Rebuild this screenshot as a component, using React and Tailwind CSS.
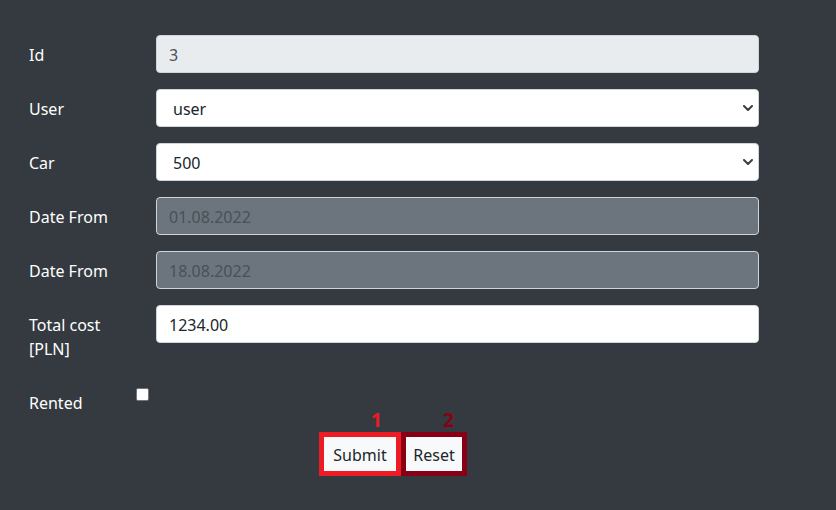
const font = { fontFamily: '"Segoe UI", "Noto Sans", "Liberation Sans", sans-serif' };

const Chevron = () => (
  <svg width="10" height="6" viewBox="0 0 10 6" className="absolute right-[5px] top-1/2 -translate-y-1/2">
    <path d="M1 1l4 4 4-4" fill="none" stroke="#3c4043" strokeWidth="2" strokeLinecap="round" strokeLinejoin="round" />
  </svg>
);

const Row = ({ label, children }) => (
  <div className="flex mb-4">
    <label className="w-[103px] shrink-0 pt-[8px] pb-[6px] leading-6 text-[16px] text-white mr-6">{label}</label>
    <div className="w-[603px]">{children}</div>
  </div>
);

const App = () => {
  return (
    <div className="w-[836px] h-[510px] bg-[#343a40] pt-[35px] pl-[29px]" style={font}>
      <Row label="Id">
        <div className="h-[38px] rounded border border-[#ced4da] bg-[#e9ecef] px-3 pt-[2px] flex items-center text-[16px] text-[#495057]">3</div>
      </Row>
      <Row label="User">
        <div className="relative h-[38px] rounded border border-[#ced4da] bg-white pl-4 pt-[2px] flex items-center text-[16px] text-[#212529]">
          user
          <Chevron />
        </div>
      </Row>
      <Row label="Car">
        <div className="relative h-[38px] rounded border border-[#ced4da] bg-white pl-4 pt-[2px] flex items-center text-[16px] text-[#212529]">
          500
          <Chevron />
        </div>
      </Row>
      <Row label="Date From">
        <div className="h-[38px] rounded border border-[#ced4da] bg-[#6c757d] px-3 pt-[2px] flex items-center text-[16px] text-[#495057]">01.08.2022</div>
      </Row>
      <Row label="Date From">
        <div className="h-[38px] rounded border border-[#ced4da] bg-[#6c757d] px-3 pt-[2px] flex items-center text-[16px] text-[#495057]">18.08.2022</div>
      </Row>
      <Row label="Total cost [PLN]">
        <div className="h-[38px] rounded border border-[#ced4da] bg-white px-3 pt-[2px] flex items-center text-[16px] text-[#212529]">1234.00</div>
      </Row>
      <div className="flex h-[38px]">
        <label className="w-[107px] shrink-0 pt-[8px] leading-6 text-[16px] text-white">Rented</label>
        <div className="pt-[5px]">
          <div className="w-[13px] h-[13px] rounded-[2px] bg-white border border-[#767676]" />
        </div>
      </div>
      <div className="relative flex ml-[290px] mt-[11px]">
        <div className="relative border-[5px] border-[#ed1c24]">
          <span className="absolute left-[47px] -top-[27px] text-[19px] font-bold leading-5 text-[#ed1c24]">1</span>
          <button className="w-[72px] h-[34px] pt-[2px] bg-[#f8f9fa] text-[16px] text-[#212529]">Submit</button>
        </div>
        <div className="relative border-[5px] border-[#880015]">
          <span className="absolute left-[37px] -top-[27px] text-[19px] font-bold leading-5 text-[#880015]">2</span>
          <button className="w-[56px] h-[34px] pt-[2px] bg-[#f8f9fa] text-[16px] text-[#212529]">Reset</button>
        </div>
      </div>
    </div>
  );
};

export default App;
